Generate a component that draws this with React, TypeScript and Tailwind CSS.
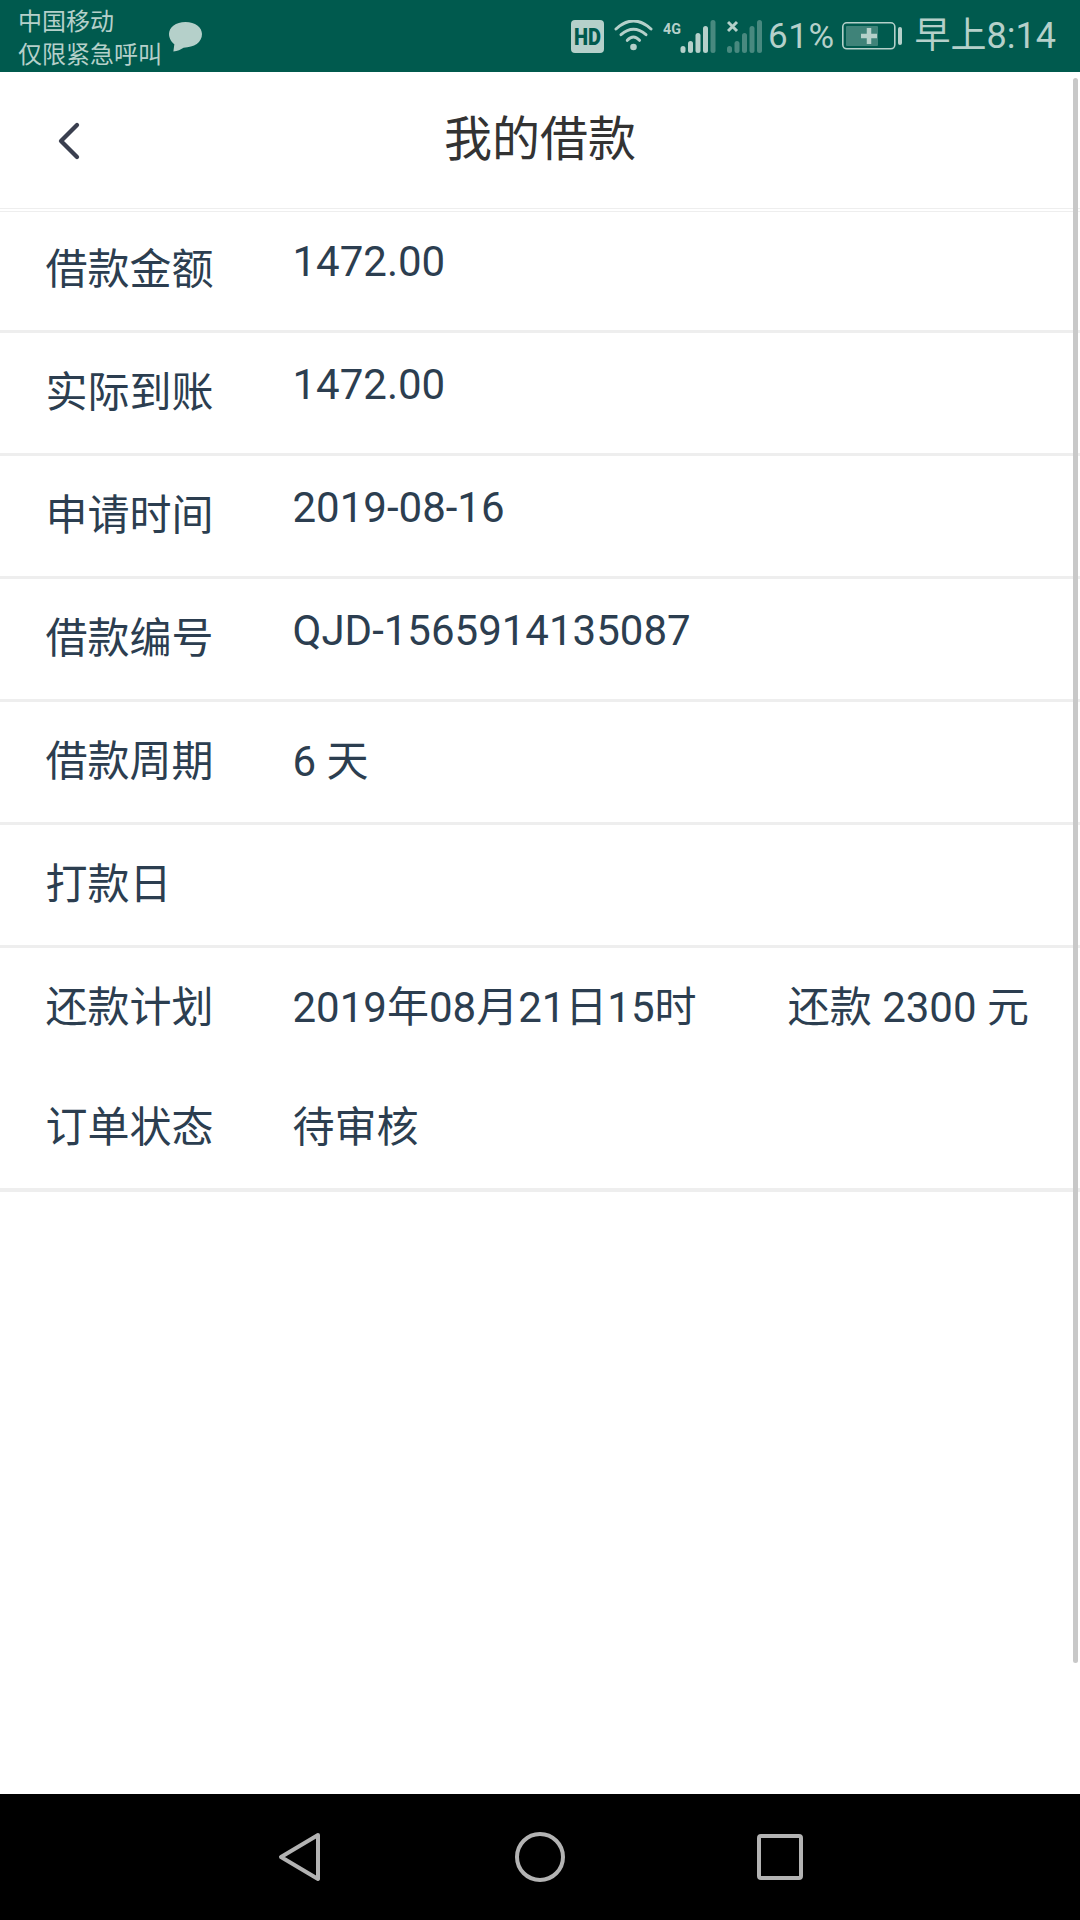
import { ChevronLeft } from 'lucide-react'

const cjk = "font-['Roboto','Noto_Sans_CJK_SC',sans-serif]"

const rows: { label: string; value?: string; latin?: boolean }[] = [
  { label: '借款金额', value: '1472.00', latin: true },
  { label: '实际到账', value: '1472.00', latin: true },
  { label: '申请时间', value: '2019-08-16', latin: true },
  { label: '借款编号', value: 'QJD-1565914135087', latin: true },
  { label: '借款周期', value: '6 天' },
  { label: '打款日' },
]

function SignalBars({ lit }: { lit: number }) {
  const tops = [26, 21, 13, 6, 0]
  return (
    <>
      {tops.map((top, i) => (
        <rect
          key={i}
          x={i * 7.5}
          y={top}
          width="5"
          height={33 - top}
          rx="2.5"
          fill="currentColor"
          opacity={i < lit ? 1 : 0.4}
        />
      ))}
    </>
  )
}

function StatusIcons() {
  return (
    <div className="flex items-center text-[#b5d0ca]">
      {/* HD */}
      <svg width="33" height="33" viewBox="0 0 33 33" className="mr-[10px]">
        <rect width="33" height="33" rx="4" fill="#b5d0ca" />
        <text x="3" y="25" fontSize="23" fontWeight="900" fontFamily="Roboto" textLength="27" lengthAdjust="spacingAndGlyphs" fill="#005a4e">HD</text>
      </svg>
      {/* wifi */}
      <svg width="39" height="33" viewBox="0 0 39 33" fill="none" stroke="currentColor" strokeWidth="3" strokeLinecap="round" className="mr-[10px]">
        <path d="M2 9 Q19.500 -7 37 9" />
        <path d="M7 14.700 Q19.500 3.900 32 14.700" />
        <path d="M13.300 20.300 Q19.500 13.700 25.500 20.300" />
        <circle cx="19.500" cy="27" r="3.300" fill="currentColor" stroke="none" />
      </svg>
      {/* 4G signal */}
      <svg width="53" height="33" viewBox="0 0 53 33" className="mr-[11px]">
        <text x="0" y="14" fontSize="15" fontWeight="700" fontFamily="Roboto" textLength="18" lengthAdjust="spacingAndGlyphs" fill="currentColor">4G</text>
        <g transform="translate(17.500 0)">
          <SignalBars lit={4} />
        </g>
      </svg>
      {/* no sim signal */}
      <svg width="35" height="33" viewBox="0 0 35 33" className="mr-[6px]">
        <path d="M1 2 L10 11 M10 2 L1 11" stroke="currentColor" strokeWidth="3" />
        <SignalBars lit={0} />
      </svg>
      <span className="mr-[7px] font-['Roboto',sans-serif] text-[35px] leading-none tracking-[0.5px]">61%</span>
      {/* battery */}
      <svg width="61" height="28" viewBox="0 0 61 28" className="mr-[12px]">
        <rect x="0.800" y="0.800" width="52" height="26" rx="4" fill="none" stroke="currentColor" strokeWidth="1.600" />
        <rect x="4" y="4" width="32" height="20" rx="1" fill="currentColor" opacity="0.35" />
        <path d="M27 6 V22 M19 14 H35" stroke="currentColor" strokeWidth="4.500" />
        <rect x="56" y="5" width="4" height="18" rx="2" fill="currentColor" />
      </svg>
      <span className={`${cjk} text-[36px] leading-none`}>早上8:14</span>
    </div>
  )
}

export default function App() {
  return (
    <div className={`relative flex h-[1920px] w-[1080px] flex-col overflow-hidden bg-white ${cjk}`}>
      {/* 状态栏 */}
      <div className="flex h-[72px] shrink-0 items-center justify-between bg-[#005a4e] pl-[18px] pr-[24px]">
        <div className="flex items-center">
          <div className="pt-[5px] text-[24px] leading-[33px] text-[#b5d0ca]">
            <div>中国移动</div>
            <div>仅限紧急呼叫</div>
          </div>
          <svg width="35" height="33" viewBox="0 0 36 34" className="ml-[6px] mt-[3px]">
            <path d="M18 1C8 1 1 6.500 1 13.500C1 18.500 4 22 6.500 24L5.500 31.500C10 31 13 29.500 16 27.500C27 27.500 35 22 35 13.500C35 6.500 28 1 18 1Z" fill="#b5d0ca" />
          </svg>
        </div>
        <StatusIcons />
      </div>

      {/* 헤더 */}
      <div className="relative flex h-[136px] shrink-0 items-center justify-center">
        <ChevronLeft className="absolute left-[37px] top-[37px] h-[64px] w-[64px] text-[#3a3f4f]" strokeWidth={1.6} />
        <h1 className="text-[48px] font-normal leading-none text-[#333333]">我的借款</h1>
      </div>
      <div className="h-[4px] shrink-0 border-y border-[#eeeeee]" />

      <div className="text-[42px] text-[#2c3e50]">
        {rows.map((r) => (
          <div
            key={r.label}
            className="flex h-[123px] items-start border-b-[3px] border-[#eeeeee] pl-[45.5px] pt-[30px] first:h-[121px] first:pt-[28px]"
          >
            <span className="w-[247px] shrink-0 leading-[60px]">{r.label}</span>
            <span className={r.latin ? '-mt-[8px] leading-[60px]' : 'leading-[60px]'}>{r.value}</span>
          </div>
        ))}
        <div className="flex h-[119px] items-center pl-[45.5px] pr-[51px]">
          <span className="w-[247px] shrink-0">还款计划</span>
          <span>2019年08月21日15时</span>
          <span className="ml-auto">还款 2300 元</span>
        </div>
        <div className="flex h-[125px] items-center border-b-[4px] border-[#eeeeee] pl-[45.5px]">
          <span className="w-[247px] shrink-0">订单状态</span>
          <span>待审核</span>
        </div>
      </div>

      {/* 스크롤바 */}
      <div className="absolute right-[2px] top-[78px] h-[1585px] w-[5px] rounded-sm bg-[#c8c8c8]" />

      {/* 네비게이션 바 */}
      <div className="mt-auto flex h-[126px] shrink-0 items-center justify-center bg-black">
        <svg width="46" height="52" viewBox="0 0 46 52" fill="none" stroke="#b3b3b3" strokeWidth="4" strokeLinejoin="round" className="absolute left-[278px] bottom-[37px]">
          <path d="M40 4 L3 26 L40 48 Z" />
        </svg>
        <svg width="50" height="50" viewBox="0 0 50 50" fill="none" stroke="#b3b3b3" strokeWidth="4" className="absolute left-[515px] bottom-[38px]">
          <circle cx="25" cy="25" r="23" />
        </svg>
        <svg width="46" height="46" viewBox="0 0 46 46" fill="none" stroke="#b3b3b3" strokeWidth="4" strokeLinejoin="round" className="absolute left-[757px] bottom-[40px]">
          <rect x="2" y="2" width="42" height="42" rx="2" />
        </svg>
      </div>
    </div>
  )
}
